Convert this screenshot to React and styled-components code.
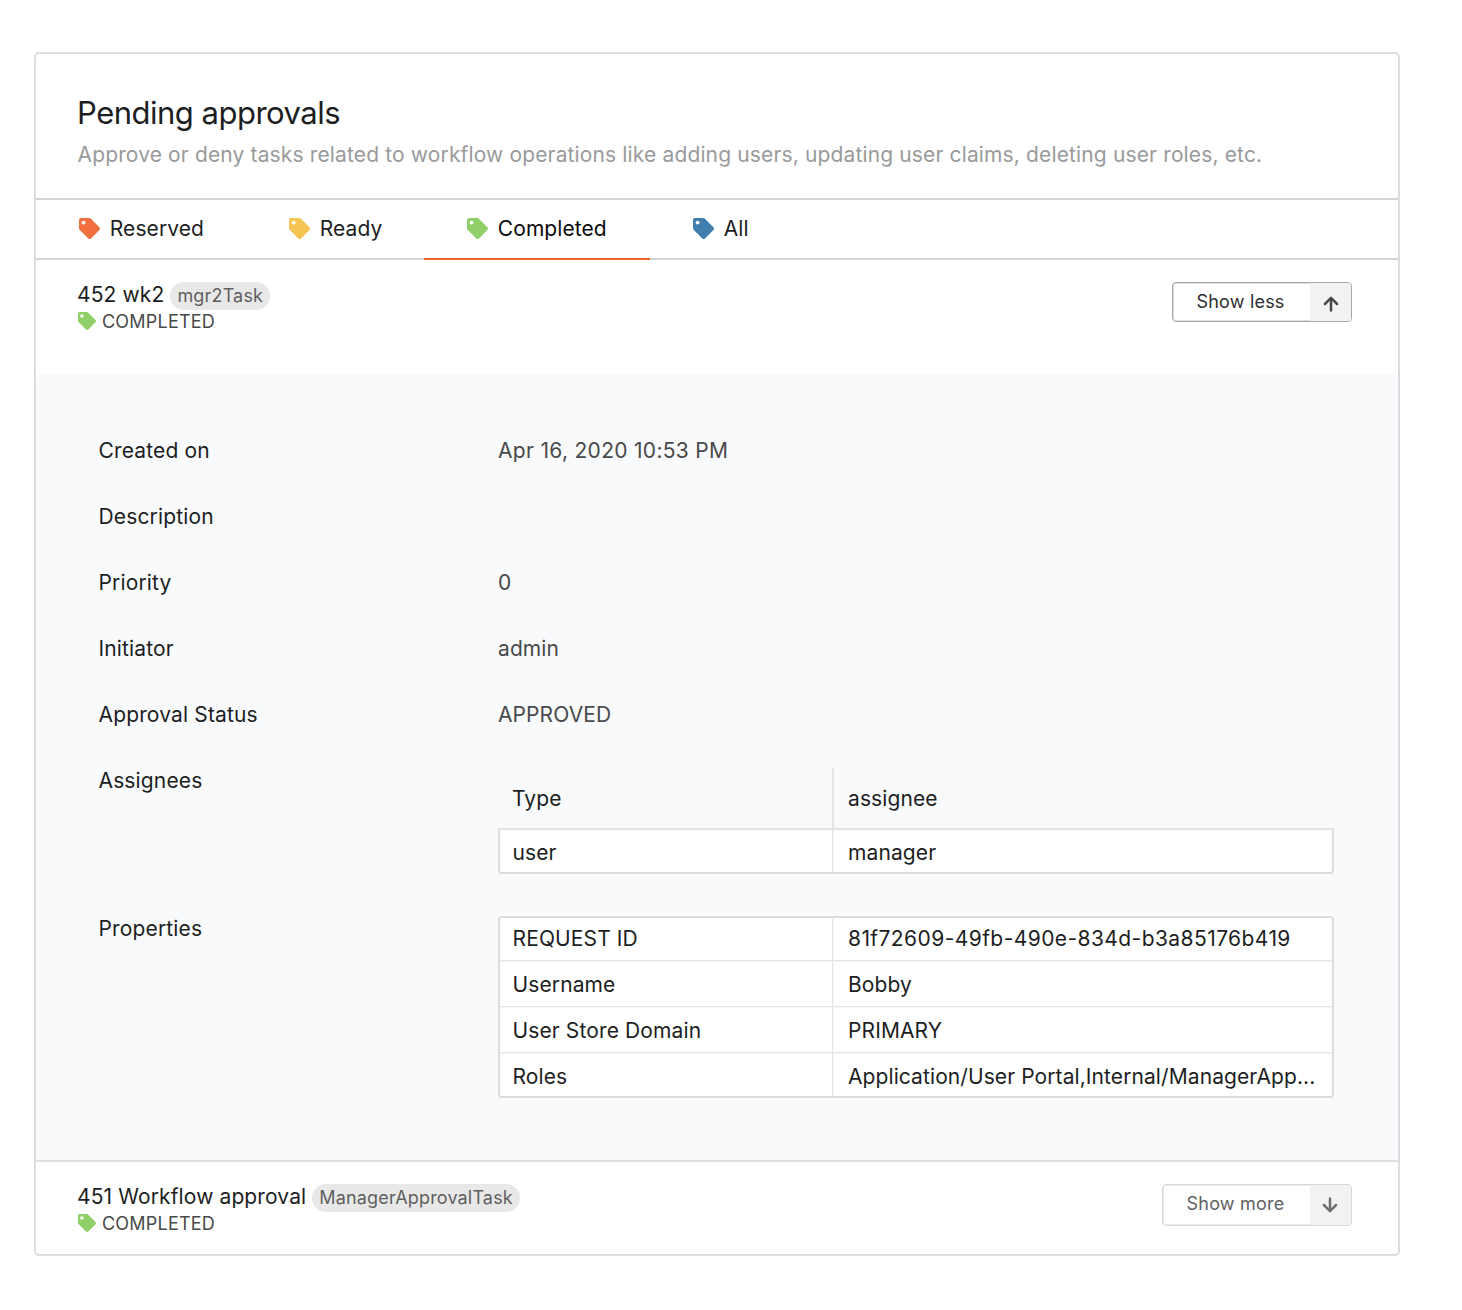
import React from 'react';
import styled, { createGlobalStyle } from 'styled-components';
import { FaTag } from 'react-icons/fa';

const GlobalStyle = createGlobalStyle`
  * { box-sizing: border-box; }
  body {
    margin: 0;
    background: #fff;
    color: #1d1e1f;
    font-family: Inter, "Liberation Sans", sans-serif;
    font-size: 21px;
    line-height: 28px;
    letter-spacing: 0.15px;
  }
`;

const Page = styled.main`
  padding: 52px 62px 54px 34px;
`;

const Card = styled.section`
  border: 2px solid #dcdce0;
  border-radius: 5px;
  background: #fff;
`;

const Header = styled.header`
  height: 146px;
  padding: 40px 41px 0;
  border-bottom: 2px solid #d4d4d5;
`;

const Title = styled.h1`
  margin: 0;
  font-size: 31px;
  font-weight: 400;
  line-height: 38px;
  letter-spacing: -0.5px;
`;

const Subtitle = styled.p`
  margin: 9px 0 0 0.5px;
  color: #999a9b;
  white-space: nowrap;
  letter-spacing: 0.142px;
`;

const Tabs = styled.nav`
  display: flex;
  height: 60px;
  border-bottom: 2px solid #d4d4d5;
`;

const Tab = styled.a`
  display: flex;
  gap: 9.8px;
  align-items: center;
  width: ${p => p.$width}px;
  height: 60px;
  padding: 0 0 1px 43px;
  border-bottom: 2px solid ${p => (p.$active ? '#f2622f' : 'transparent')};
  color: ${p => (p.$active ? '#0b0b0b' : '#1d1e1f')};
  letter-spacing: 0.08px;
`;

const TagIcon = styled(FaTag)`
  flex: none;
  width: ${p => p.$size}px;
  height: ${p => p.$size}px;
  margin-bottom: ${p => p.$lift}px;
  color: ${p => p.$tone};
`;

const Item = styled.article`
  display: flex;
  justify-content: space-between;
  height: ${p => p.$height}px;
  padding: 21px 46px 0 41px;
`;

const Heading = styled.div`
  display: flex;
  gap: 6px;
  align-items: flex-start;
  height: 29px;
  letter-spacing: 0.12px;
`;

const Badge = styled.span`
  height: 28px;
  margin-top: 1px;
  padding: 0 7px;
  border-radius: 14px;
  background: #e8e8e8;
  color: #5f5f60;
  font-size: 18px;
  letter-spacing: 0.17px;
`;

const Status = styled.div`
  display: flex;
  gap: 6px;
  align-items: center;
  height: 24px;
  padding-left: 1px;
  color: #48494a;
  font-size: 18px;
  letter-spacing: 0.22px;
`;

const Toggle = styled.button`
  display: flex;
  align-items: stretch;
  justify-content: space-between;
  width: ${p => (p.$open ? 180 : 190)}px;
  height: ${p => (p.$open ? 40 : 42)}px;
  margin-top: 1px;
  padding: 0;
  overflow: hidden;
  border: 1px solid ${p => (p.$open ? '#a9a9a9' : '#d8d8d9')};
  box-shadow: inset 0 0 0 1px ${p => (p.$open ? '#dcdcdc' : '#ededed')};
  border-radius: 4px;
  background: #fff;
  color: ${p => (p.$open ? '#2d2e2f' : '#606162')};
  font: inherit;
  font-size: 18px;
  letter-spacing: 0.2px;
`;

const ToggleLabel = styled.span`
  flex: 1;
  padding: 5px 2px 0 0;
  text-align: center;
`;

const ToggleIcon = styled.span`
  display: flex;
  align-items: center;
  justify-content: center;
  width: 41px;
  padding: ${p => (p.$open ? '3px 0 0' : '0 1px 1px 0')};
  background: #f2f2f2;
  color: ${p => (p.$open ? '#484949' : '#707070')};
`;

const Arrow = styled.svg`
  width: 16px;
  height: 16px;
  transform: ${p => (p.$down ? 'rotate(180deg)' : 'none')};
`;

const Details = styled.dl`
  height: 786px;
  margin: 0;
  padding: 43px 64px 0 62px;
  border-radius: 5px 5px 0 0;
  background: #f9fafc;
`;

const Detail = styled.div`
  display: grid;
  grid-template-columns: 400px 1fr;
  height: ${p => p.$height || 66}px;
`;

const Term = styled.dt`
  padding: 20px 0 0 0.5px;
`;

const Value = styled.dd`
  margin: 0;
  padding-top: ${p => (p.$table ? 21 : 20)}px;
  color: #48494a;
  letter-spacing: ${p => p.$spacing || 0.1}px;
`;

const Table = styled.div`
  border: 2px solid #dcddde;
  border-top-width: ${p => (p.$headless ? 2 : 0)}px;
  border-radius: ${p => (p.$headless ? '4px' : '0 0 4px 4px')};
  background: #fff;
  color: #1d1e1f;
`;

const TableHead = styled.div`
  display: grid;
  grid-template-columns: 334px 1fr;
  height: 62px;
  border-bottom: 2px solid #e2e3e5;
  color: #1d1e1f;
`;

const HeadCell = styled.div`
  padding: 17px 14px 0;

  & + & { border-left: 2px solid #e2e3e5; }
`;

const Row = styled.div`
  display: grid;
  grid-template-columns: 332px 1fr;
  height: ${p => p.$height}px;

  & + & {
    border-top: 1px solid #e6e6e7;
    box-shadow: inset 0 1px 0 #f6f6f7;
  }
`;

const Cell = styled.div`
  display: flex;
  align-items: center;
  min-width: 0;
  padding: ${p => p.$drop || 0}px 13px 0 12.5px;
  white-space: nowrap;
  letter-spacing: ${p => p.$spacing || 0.12}px;

  & + & {
    padding-left: 15px;
    border-left: 1px solid #e6e6e7;
    box-shadow: inset 1px 0 0 #f6f6f7;
  }
`;

const Divider = styled.hr`
  height: 2px;
  margin: 0;
  border: 0;
  background: #dedfe1;
`;

const TABS = [
  { label: 'Reserved', tone: '#f2703f', width: 210 },
  { label: 'Ready', tone: '#f5c553', width: 178 },
  { label: 'Completed', tone: '#91cf69', width: 226, active: true },
  { label: 'All', tone: '#417dae', width: 140 },
];

const FIELDS = [
  { term: 'Created on', value: 'Apr 16, 2020 10:53 PM', spacing: 0.31 },
  { term: 'Description', value: '' },
  { term: 'Priority', value: '0' },
  { term: 'Initiator', value: 'admin' },
  { term: 'Approval Status', value: 'APPROVED' },
];

const PROPERTIES = [
  { name: 'REQUEST ID', value: '81f72609-49fb-490e-834d-b3a85176b419', spacing: 0.42, height: 42, drop: 0 },
  { name: 'Username', value: 'Bobby', height: 46, drop: 3 },
  { name: 'User Store Domain', value: 'PRIMARY', height: 46, drop: 3 },
  { name: 'Roles', value: 'Application/User Portal,Internal/ManagerApp...', spacing: 0.09, height: 44, drop: 5 },
];

function Approval({ title, task, open, height }) {
  return (
    <Item $height={height}>
      <div>
        <Heading>
          <span>{title}</span>
          <Badge>{task}</Badge>
        </Heading>
        <Status>
          <TagIcon $size={18} $lift={2} $tone="#91cf69" />
          COMPLETED
        </Status>
      </div>
      <Toggle $open={open}>
        <ToggleLabel>{open ? 'Show less' : 'Show more'}</ToggleLabel>
        <ToggleIcon $open={open}>
          <Arrow $down={!open} viewBox="0 0 16 16" fill="none" stroke="currentColor" strokeWidth="2.5" strokeLinecap="round" strokeLinejoin="round">
            <path d="M8 14.4V2M1.9 8L8 1.9L14.1 8" />
          </Arrow>
        </ToggleIcon>
      </Toggle>
    </Item>
  );
}

export default function App() {
  return (
    <Page>
      <GlobalStyle />
      <Card>
        <Header>
          <Title>Pending approvals</Title>
          <Subtitle>
            Approve or deny tasks related to workflow operations like adding users, updating user claims, deleting user roles, etc.
          </Subtitle>
        </Header>
        <Tabs>
          {TABS.map(tab => (
            <Tab key={tab.label} $width={tab.width} $active={tab.active}>
              <TagIcon $size={21} $lift={1} $tone={tab.tone} />
              {tab.label}
            </Tab>
          ))}
        </Tabs>
        <Approval title="452 wk2" task="mgr2Task" open height={114} />
        <Details>
          {FIELDS.map(field => (
            <Detail key={field.term}>
              <Term>{field.term}</Term>
              <Value $spacing={field.spacing}>{field.value}</Value>
            </Detail>
          ))}
          <Detail $height={148}>
            <Term>Assignees</Term>
            <Value $table>
              <TableHead>
                <HeadCell>Type</HeadCell>
                <HeadCell>assignee</HeadCell>
              </TableHead>
              <Table>
                <Row $height={42}>
                  <Cell $drop={4}>user</Cell>
                  <Cell $drop={4}>manager</Cell>
                </Row>
              </Table>
            </Value>
          </Detail>
          <Detail $height={220}>
            <Term>Properties</Term>
            <Value $table>
              <Table $headless>
                {PROPERTIES.map(row => (
                  <Row key={row.name} $height={row.height}>
                    <Cell $drop={row.drop}>{row.name}</Cell>
                    <Cell $drop={row.drop} $spacing={row.spacing}>{row.value}</Cell>
                  </Row>
                ))}
              </Table>
            </Value>
          </Detail>
        </Details>
        <Divider />
        <Approval title="451 Workflow approval" task="ManagerApprovalTask" height={92} />
      </Card>
    </Page>
  );
}
